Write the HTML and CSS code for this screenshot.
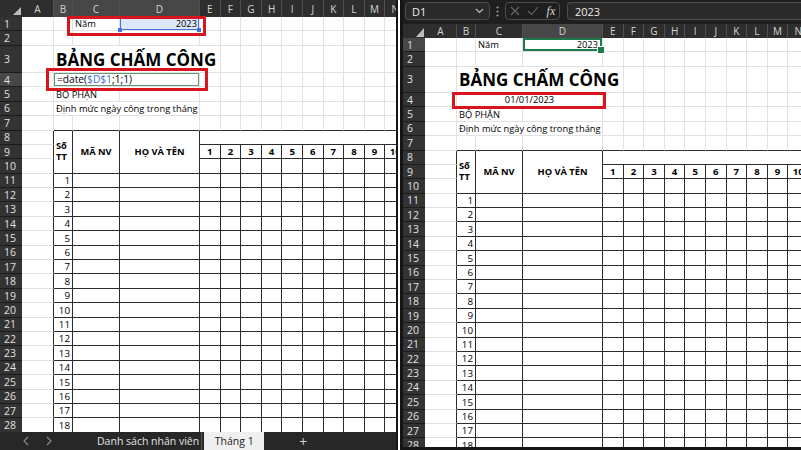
FILE: index.html
```html
<!DOCTYPE html>
<html>
  <head>
    <title>Bảng chấm công</title>
    <meta charset="UTF-8" />
    <link rel="stylesheet" href="styles.css">
  </head>

  <body>
    <div class="screens">
      <div class="panel panel-left">
        <div class="sheet sheet-left" id="sheet-left"></div>
        <div class="tabbar">
          <span class="nav">
            <svg width="8" height="10" viewBox="0 0 8 10"><polyline points="6,1 2,5 6,9" fill="none" stroke="#8a8a8a" stroke-width="1.2"/></svg>
          </span>
          <span class="nav">
            <svg width="8" height="10" viewBox="0 0 8 10"><polyline points="2,1 6,5 2,9" fill="none" stroke="#8a8a8a" stroke-width="1.2"/></svg>
          </span>
          <span class="tab">Danh sách nhân viên</span>
          <span class="tab tab-active">Tháng 1</span>
          <span class="tab-add">+</span>
        </div>
        <div class="mark mark-year"></div>
        <div class="mark mark-formula"></div>
      </div>

      <div class="panel panel-right">
        <div class="fbar">
          <div class="namebox">
            <span>D1</span>
            <svg width="9" height="6" viewBox="0 0 9 6"><polyline points="1,1 4.5,4.5 8,1" fill="none" stroke="#bdbdbd" stroke-width="1.2"/></svg>
          </div>
          <div class="vdots">
            <svg width="3" height="11" viewBox="0 0 3 11"><circle cx="1.5" cy="1.5" r="1.1" fill="#9a9a9a"/><circle cx="1.5" cy="5.5" r="1.1" fill="#9a9a9a"/><circle cx="1.5" cy="9.5" r="1.1" fill="#9a9a9a"/></svg>
          </div>
          <div class="fx-tools">
            <svg width="10" height="10" viewBox="0 0 10 10"><path d="M1 1 L9 9 M9 1 L1 9" stroke="#666" stroke-width="1.1"/></svg>
            <svg width="12" height="10" viewBox="0 0 12 10"><polyline points="1,5 4.5,8.5 11,1" fill="none" stroke="#666" stroke-width="1.1"/></svg>
            <span class="fx">fx</span>
          </div>
          <div class="fx-input">2023</div>
        </div>
        <div class="sheet sheet-right" id="sheet-right"></div>
        <div class="mark mark-date"></div>
      </div>
    </div>

    <script src="script.js"></script>
  </body>
</html>
```

FILE: styles.css
```css
* {
  box-sizing: border-box;
}

body {
  margin: 0;
  width: 801px;
  height: 450px;
  overflow: hidden;
  background: #fff;
  font-family: "Open Sans", "Noto Sans", sans-serif;
}

.screens {
  display: flex;
  gap: 2px;
  height: 450px;
}

.panel {
  position: relative;
  display: flex;
  flex-direction: column;
  height: 450px;
  overflow: hidden;
  background: #fff;
}

.panel-left {
  width: 398px;
  border-right: 2px solid #151515;
}

.panel-right {
  width: 401px;
  border-left: 3px solid #151515;
  border-bottom: 3px solid #151515;
}

/* grid of cells */

.sheet {
  display: grid;
  grid-template-columns: 22px 32px 19px 47px 80px repeat(10, 20.6px);
  overflow: hidden;
  background: #fff;
}

.sheet-left {
  height: 432px;
  flex: none;
  grid-template-rows: 17px 14.4px 14.4px 27.2px repeat(25, 14.4px);
}

.sheet-right {
  flex: 1;
  min-height: 0;
  grid-template-rows: 14px 14.4px 14.4px 26.2px repeat(25, 14.4px);
}

.corner {
  background: #2e2e2e;
  display: flex;
}

.col-head {
  display: flex;
  align-items: center;
  justify-content: center;
  background: #2e2e2e;
  color: #d4d4d4;
  font-size: 10px;
  border-right: 1px solid #4f4f4f;
}

.row-head {
  display: flex;
  align-items: center;
  padding-left: 4px;
  background: #333;
  color: #e0e0e0;
  font-size: 10.5px;
  border-bottom: 1px solid #1b1b1b;
}

.col-head.active,
.row-head.active {
  background: #474747;
}

.cell {
  display: flex;
  align-items: flex-end;
  min-width: 0;
  padding: 0 2px 1px;
  border-right: 1px solid #e2e2e2;
  border-bottom: 1px solid #e2e2e2;
  font-size: 9.3px;
  line-height: 11px;
  color: #000;
  white-space: nowrap;
}

.cell.boxed {
  border-right-color: #2c2c2c;
  border-bottom-color: #2c2c2c;
}

.cell.edge-left {
  border-right-color: #2c2c2c;
}

.cell.edge-top {
  border-bottom-color: #2c2c2c;
}

.cell.spill {
  border-right-color: transparent;
}

.cell.right {
  justify-content: flex-end;
}

.cell.center {
  justify-content: center;
}

.title {
  font-size: 17px;
  font-weight: 700;
  line-height: 20px;
  padding-bottom: 2px;
}

.th {
  align-items: center;
  justify-content: center;
  font-weight: 700;
  text-align: center;
  white-space: normal;
}

.th-left {
  justify-content: flex-start;
  text-align: left;
  line-height: 11px;
}

.day {
  justify-content: center;
  font-weight: 700;
  font-size: 9.6px;
}

.num {
  justify-content: flex-end;
  font-size: 9.8px;
}

/* D1 referenced by the formula */
.ref {
  position: relative;
  background: #dce7f7;
  box-shadow: inset 0 0 0 1px #3f76d4;
}

.ref::before,
.ref::after {
  content: "";
  position: absolute;
  bottom: -2px;
  width: 4px;
  height: 4px;
  background: #3f76d4;
}

.ref::before {
  left: -2px;
}

.ref::after {
  right: -2px;
}

.sel {
  position: relative;
  padding-right: 4px;
  box-shadow: inset 0 0 0 2px #1d7a48;
}

.sel::after {
  content: "";
  position: absolute;
  right: -3px;
  bottom: -3px;
  width: 6px;
  height: 6px;
  background: #1d7a48;
  border: 1px solid #fff;
}

.editing {
  align-items: center;
  padding-left: 3px;
  font-size: 10.2px;
  box-shadow: inset 0 0 0 1px #5f9a74;
}

.ref-text {
  color: #3d6fd1;
}

/* red highlight boxes */
.mark {
  position: absolute;
  border: 3px solid #d8151c;
}

.mark-year {
  left: 67px;
  top: 16px;
  width: 139px;
  height: 20px;
}

.mark-formula {
  left: 46px;
  top: 68px;
  width: 162px;
  height: 23px;
}

.mark-date {
  left: 49px;
  top: 92px;
  width: 154px;
  height: 17px;
}

/* sheet tabs */
.tabbar {
  display: flex;
  align-items: stretch;
  height: 18px;
  padding-left: 14px;
  background: #272727;
}

.nav {
  display: flex;
  align-items: center;
  justify-content: center;
  width: 23px;
}

.tab {
  display: flex;
  align-items: center;
  padding: 0 2px 0 37px;
  color: #e2e2e2;
  font-size: 10.5px;
  border-right: 1px solid #555;
}

.tab-active {
  width: 60px;
  margin-left: 2px;
  padding: 0;
  justify-content: center;
  background: #efefef;
  color: #222;
  font-size: 10.5px;
  border-right: 0;
}

.tab-add {
  display: flex;
  align-items: center;
  margin-left: 35px;
  color: #d0d0d0;
  font-size: 14px;
}

/* formula bar */
.fbar {
  display: flex;
  flex: none;
  height: 24px;
  padding-top: 2px;
  background: #1f1f1f;
}

.namebox {
  display: flex;
  align-items: center;
  justify-content: space-between;
  width: 85px;
  height: 18px;
  margin-left: 2px;
  padding: 0 5px 0 6px;
  background: #2a2a2a;
  border: 1px solid #4d4d4d;
  border-radius: 4px;
  color: #ececec;
  font-size: 11px;
}

.vdots {
  display: flex;
  align-items: center;
  justify-content: center;
  width: 15px;
  height: 18px;
}

.fx-tools {
  display: flex;
  align-items: center;
  justify-content: space-around;
  width: 55px;
  height: 18px;
  border: 1px solid #4d4d4d;
  border-radius: 4px;
}

.fx {
  font-family: "Liberation Serif", serif;
  font-style: italic;
  font-size: 12px;
  color: #d6d6d6;
}

.fx-input {
  display: flex;
  align-items: center;
  flex: 1;
  height: 18px;
  margin-left: 7px;
  padding-left: 7px;
  background: #2a2a2a;
  border: 1px solid #4d4d4d;
  border-right: 0;
  border-radius: 4px 0 0 4px;
  color: #ececec;
  font-size: 11px;
}
```

FILE: script.js
```js
const COLS = ['A', 'B', 'C', 'D', 'E', 'F', 'G', 'H', 'I', 'J', 'K', 'L', 'M', 'N'];

function addCell(sheet, row, col, className, rowSpan, colSpan) {
  const el = document.createElement('div');
  el.className = className;
  el.style.gridRow = row + 1 + ' / span ' + (rowSpan || 1);
  el.style.gridColumn = col + 1 + ' / span ' + (colSpan || 1);
  sheet.appendChild(el);
  return el;
}

function buildSheet(sheet, opts) {
  const corner = addCell(sheet, 0, 0, 'corner');
  corner.innerHTML = opts.corner;

  COLS.forEach(function (name, i) {
    const head = addCell(sheet, 0, i + 1, 'col-head');
    if (opts.activeCols.indexOf(name) >= 0) head.classList.add('active');
    head.textContent = name;
  });

  const taken = {};
  opts.cells.forEach(function (item) {
    const col = COLS.indexOf(item.at[0]) + 1;
    const row = Number(item.at.slice(1));
    const rs = item.rows || 1;
    const cs = item.cols || 1;
    const el = addCell(sheet, row, col, 'cell ' + (item.cls || ''), rs, cs);
    if (item.html) el.innerHTML = item.html;
    else if (item.text) el.textContent = item.text;
    for (let r = row; r < row + rs; r++) {
      for (let c = col; c < col + cs; c++) taken[r + ':' + c] = true;
    }
  });

  for (let r = 1; r <= 28; r++) {
    const rh = addCell(sheet, r, 0, 'row-head');
    if (opts.activeRow === r) rh.classList.add('active');
    rh.textContent = r;

    for (let c = 1; c <= COLS.length; c++) {
      if (taken[r + ':' + c]) continue;
      let cls = 'cell';
      if (c === 1 && r >= 8) cls += ' edge-left';
      if (c >= 2 && r === 7) cls += ' edge-top';
      if (c >= 2 && r >= 8) cls += ' boxed';
      if (opts.spill[r] && opts.spill[r].indexOf(COLS[c - 1]) >= 0) cls += ' spill';
      const el = addCell(sheet, r, c, cls);
      if (c === 2 && r >= 11) {
        el.classList.add('num');
        el.textContent = r - 10;
      }
      if (c >= 5 && r === 9) {
        el.classList.add('day');
        el.textContent = c - 4;
      }
    }
  }
}

// cells shared by both screenshots
const common = [
  { at: 'C1', text: 'Năm' },
  { at: 'B3', text: 'BẢNG CHẤM CÔNG', cls: 'title spill' },
  { at: 'B5', text: 'BỘ PHẬN', cls: 'spill' },
  { at: 'B6', text: 'Định mức ngày công trong tháng', cls: 'spill' },
  { at: 'B8', text: 'Số TT', rows: 3, cls: 'boxed th th-left' },
  { at: 'C8', text: 'MÃ NV', rows: 3, cls: 'boxed th' },
  { at: 'D8', text: 'HỌ VÀ TÊN', rows: 3, cls: 'boxed th' },
  { at: 'E8', text: '', cols: 10, cls: 'boxed' },
];

const spill = { 3: ['C', 'D'], 6: ['C'] };

buildSheet(document.getElementById('sheet-left'), {
  corner: '<svg width="22" height="17"><polygon points="21,7 21,15 13,15" fill="#bdbdbd"/></svg>',
  activeCols: ['B', 'C', 'D'],
  activeRow: 4,
  spill: spill,
  cells: common.concat([
    { at: 'D1', text: '2023', cls: 'right ref' },
    { at: 'B4', cols: 3, cls: 'editing', html: '=date(<span class="ref-text">$D$1</span>;1;1)' },
  ]),
});

buildSheet(document.getElementById('sheet-right'), {
  corner: '<svg width="22" height="14"><polygon points="21,4 21,13 13,13" fill="#bdbdbd"/></svg>',
  activeCols: ['D'],
  activeRow: 1,
  spill: spill,
  cells: common.concat([
    { at: 'D1', text: '2023', cls: 'right sel' },
    { at: 'B4', text: '01/01/2023', cols: 3, cls: 'center' },
  ]),
});
```
